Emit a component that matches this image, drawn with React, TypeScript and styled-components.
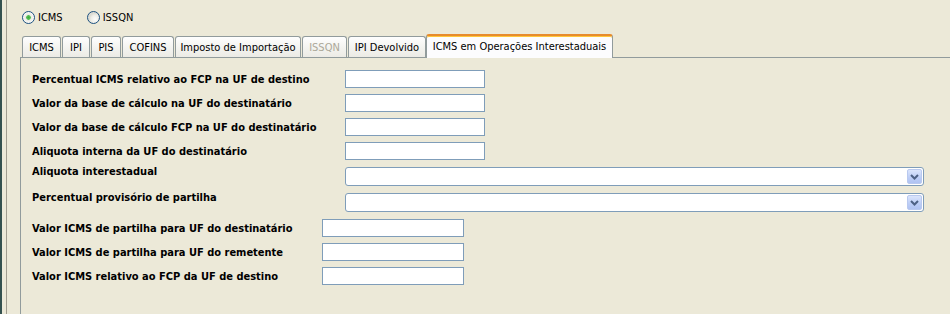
import styled, { createGlobalStyle } from 'styled-components';

const GlobalStyle = createGlobalStyle`
  html, body {
    margin: 0;
    padding: 0;
    background: #ece9d8;
    overflow: hidden;
  }
  body {
    font-family: "DejaVu Sans Condensed", "DejaVu Sans", sans-serif;
    font-stretch: condensed;
    font-size: 11px;
    color: #000;
  }
`;

const tabs = [
  { label: 'ICMS', width: 39 },
  { label: 'IPI', width: 28 },
  { label: 'PIS', width: 30 },
  { label: 'COFINS', width: 52 },
  { label: 'Imposto de Importação', width: 126 },
  { label: 'ISSQN', width: 45, disabled: true },
  { label: 'IPI Devolvido', width: 78 },
  { label: 'ICMS em Operações Interestaduais', width: 187, selected: true },
];

type Row = { label: string; kind: 'text' | 'combo' };

const upperRows: Row[] = [
  { label: 'Percentual ICMS relativo ao FCP na UF de destino', kind: 'text' },
  { label: 'Valor da base de cálculo na UF do destinatário', kind: 'text' },
  { label: 'Valor da base de cálculo FCP na UF do destinatário', kind: 'text' },
  { label: 'Aliquota interna da UF do destinatário', kind: 'text' },
  { label: 'Aliquota interestadual', kind: 'combo' },
  { label: 'Percentual provisório de partilha', kind: 'combo' },
];

const lowerRows = [
  'Valor ICMS de partilha para UF do destinatário',
  'Valor ICMS de partilha para UF do remetente',
  'Valor ICMS relativo ao FCP da UF de destino',
];

export default function App() {
  return (
    <>
      <GlobalStyle />
      <Window>
        <Rail>
          <RadioRow>
            <RadioOption>
              <RadioCircle $checked />
              ICMS
            </RadioOption>
            <RadioOption>
              <RadioCircle />
              ISSQN
            </RadioOption>
          </RadioRow>

          <TabStrip>
            {tabs.map((t) => (
              <Tab key={t.label} $width={t.width} $selected={t.selected} $disabled={t.disabled}>
                {t.label}
              </Tab>
            ))}
          </TabStrip>

          <Panel>
            <FormGrid $labelCol={313}>
              {upperRows.map((r) =>
                r.kind === 'text' ? (
                  <Line key={r.label}>
                    <Label>{r.label}</Label>
                    <TextField $width={140} />
                  </Line>
                ) : (
                  <Line key={r.label}>
                    <Label $top>{r.label}</Label>
                    <Combo>
                      <ComboButton>
                        <svg width="9" height="6" viewBox="0 0 9 6">
                          <path d="M1 1 L4.5 4.5 L8 1" fill="none" stroke="#4d6185" strokeWidth="2" />
                        </svg>
                      </ComboButton>
                    </Combo>
                  </Line>
                )
              )}
            </FormGrid>

            <FormGrid $labelCol={290} $lower>
              {lowerRows.map((label) => (
                <Line key={label}>
                  <Label>{label}</Label>
                  <TextField $width={142} />
                </Line>
              ))}
            </FormGrid>
          </Panel>
        </Rail>
      </Window>
    </>
  );
}

const Window = styled.div`
  height: 314px;
  overflow: hidden;
  border-left: 2px solid #34514f;
  padding-left: 4px;
  box-sizing: border-box;
`;

const Rail = styled.div`
  height: 100%;
  display: flex;
  flex-direction: column;
  border-left: 1px solid #a09d8f;
  padding-left: 13px;
  box-sizing: border-box;
`;

const RadioRow = styled.div`
  display: flex;
  gap: 24px;
  padding: 11px 0 0 2px;
  height: 13px;
`;

const RadioOption = styled.label`
  display: flex;
  align-items: center;
  gap: 3px;
  height: 13px;
  line-height: 13px;
`;

const RadioCircle = styled.span<{ $checked?: boolean }>`
  width: 13px;
  height: 13px;
  box-sizing: border-box;
  border-radius: 50%;
  border: 1px solid #1c5180;
  background: ${(p) =>
    p.$checked
      ? 'radial-gradient(circle, #3ea83e 0, #56c256 2px, #e8e8e2 2.6px, #fdfdfb 6px)'
      : 'radial-gradient(circle at 65% 65%, #fdfdfb 0, #eeeee8 4px, #dcdcd4 6px)'};
`;

const TabStrip = styled.div`
  display: flex;
  align-items: flex-end;
  gap: 1px;
  margin-top: 10px;
  padding-left: 2px;
  height: 23px;
  flex-shrink: 0;
`;

const Tab = styled.div<{ $width: number; $selected?: boolean; $disabled?: boolean }>`
  width: ${(p) => p.$width}px;
  height: ${(p) => (p.$selected ? 24 : 21)}px;
  box-sizing: border-box;
  display: flex;
  justify-content: center;
  align-items: ${(p) => (p.$selected ? 'flex-start' : 'center')};
  padding-top: ${(p) => (p.$selected ? 4 : 1)}px;
  white-space: nowrap;
  border: 1px solid #919b9c;
  border-bottom: none;
  border-radius: 3px 3px 0 0;
  color: ${(p) => (p.$disabled ? '#aca899' : '#000')};
  background: ${(p) => (p.$selected ? '#fcfcfe' : 'linear-gradient(#fefefe, #f2f2ee 60%, #ecebe5)')};
  margin-left: ${(p) => (p.$selected ? -1 : 0)}px;
  margin-bottom: ${(p) => (p.$selected ? -1 : 0)}px;
  position: relative;
  z-index: ${(p) => (p.$selected ? 1 : 0)};
  ${(p) =>
    p.$selected &&
    `
    border-top: 2px solid #e68b2c;
    box-shadow: inset 0 1px 0 #ffc73c;
  `}
`;

const Panel = styled.div`
  flex: 1;
  margin-right: -40px;
  border-top: 1px solid #919b9c;
  border-left: 1px solid #919b9c;
  padding: 12px 0 0 11px;
`;

const FormGrid = styled.div<{ $labelCol: number; $lower?: boolean }>`
  display: grid;
  grid-template-columns: ${(p) => p.$labelCol}px 579px;
  row-gap: 6px;
  margin-top: ${(p) => (p.$lower ? 7 : 0)}px;
`;

const Line = styled.div`
  display: contents;
`;

const Label = styled.div<{ $top?: boolean }>`
  font-weight: bold;
  line-height: 13px;
  white-space: nowrap;
  align-self: ${(p) => (p.$top ? 'start' : 'center')};
  margin-top: ${(p) => (p.$top ? -1 : 0)}px;
`;

const TextField = styled.div<{ $width: number }>`
  width: ${(p) => p.$width}px;
  height: 18px;
  box-sizing: border-box;
  background: #fff;
  border: 1px solid #7f9db9;
`;

const Combo = styled.div`
  width: 579px;
  height: 19px;
  margin-top: 1px;
  box-sizing: border-box;
  background: #fff;
  border: 1px solid #7f9db9;
  border-radius: 3px;
  display: flex;
  justify-content: flex-end;
  align-items: center;
  padding-right: 1px;
`;

const ComboButton = styled.div`
  width: 15px;
  height: 15px;
  box-sizing: border-box;
  border: 1px solid #b9c9ef;
  border-radius: 2px;
  background: linear-gradient(#dbe5fc, #bccdf6 60%, #b0c3f2);
  display: flex;
  align-items: center;
  justify-content: center;
`;
